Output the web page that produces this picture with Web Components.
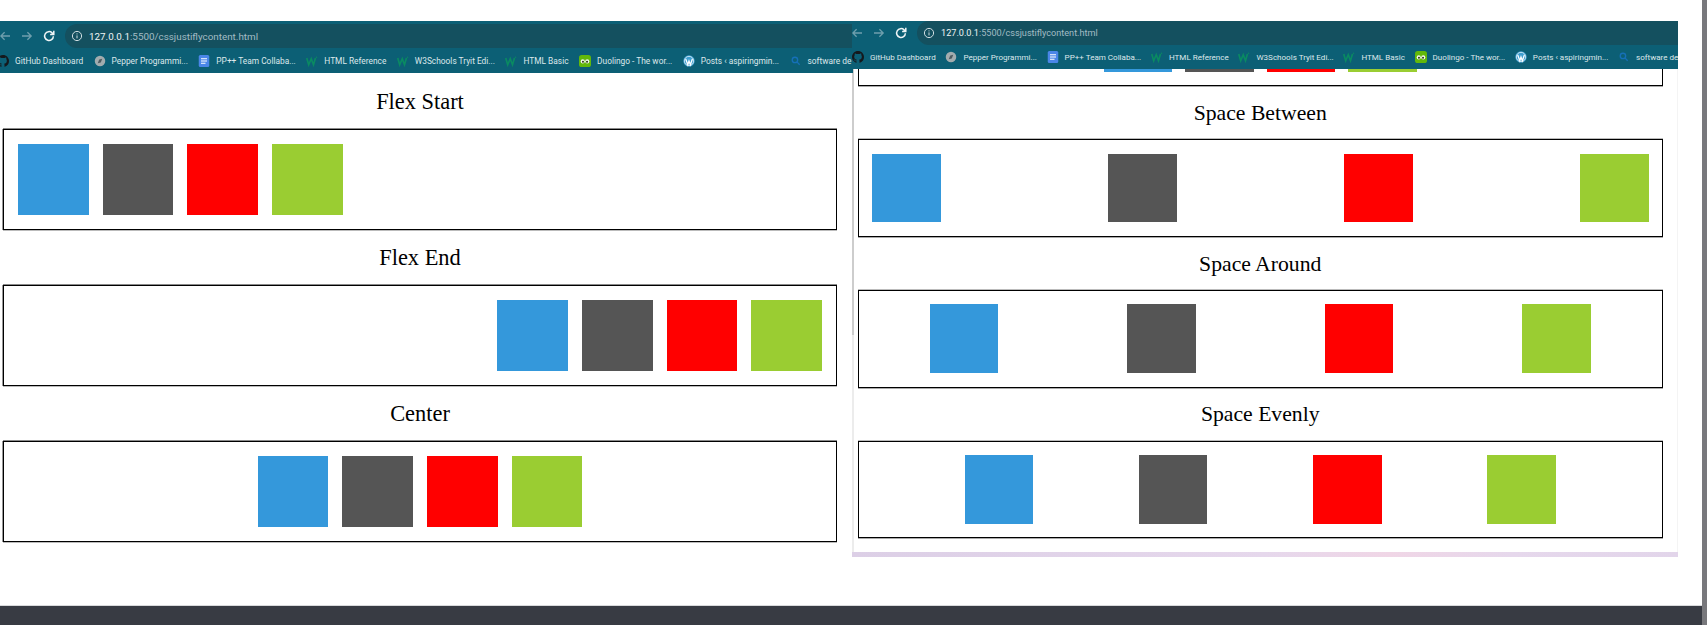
<!DOCTYPE html>
<html lang="en">
<head>
<meta charset="utf-8">
<title>cssjustiflycontent</title>
<style>
  html, body { margin: 0; height: 100%; background: #fff; overflow: hidden; }
</style>
</head>
<body>
<desk-top>
  <!-- left window, scrolled to the top of the demo page -->
  <browser-window url-host="127.0.0.1" url-rest=":5500/cssjustiflycontent.html"
    style="left:0;top:21px;width:853px;height:584px;--bar-h:27px;--pill-top:3px;--pill-h:24px;--url-size:9.85px;--marks-h:25px;--mark-size:8.35px;--mark-gap:10.5px;--marks-x:-3px;--page-pad:1.4px 16px 0 3px;--sq:70.7px;--m:7px;--p:7.5px;--head:54.3px;--head-size:22.4px;--edge:0 -1px 0 #8a8a8a,0 1px 0 #bbb,-1px 0 0 #999">
    <bookmark-bar>
      <book-mark icon="github">GitHub Dashboard</book-mark>
      <book-mark icon="pepper">Pepper Programmi...</book-mark>
      <book-mark icon="docs">PP++ Team Collaba...</book-mark>
      <book-mark icon="w3">HTML Reference</book-mark>
      <book-mark icon="w3">W3Schools Tryit Edi...</book-mark>
      <book-mark icon="w3">HTML Basic</book-mark>
      <book-mark icon="duo">Duolingo - The wor...</book-mark>
      <book-mark icon="wp">Posts ‹ aspiringmin...</book-mark>
      <book-mark icon="search">software de</book-mark>
    </bookmark-bar>
    <flex-demo heading="Flex Start" justify="flex-start"></flex-demo>
    <flex-demo heading="Flex End" justify="flex-end"></flex-demo>
    <flex-demo heading="Center" justify="center"></flex-demo>
  </browser-window>

  <!-- right window, same page scrolled further down -->
  <browser-window framed url-host="127.0.0.1" url-rest=":5500/cssjustiflycontent.html"
    style="left:852px;top:21px;width:826px;height:536px;--bar-h:24px;--pill-top:0px;--pill-h:24px;--url-size:9.15px;--marks-h:24px;--mark-size:8.05px;--mark-gap:9.7px;--marks-x:0px;--page-pad:0 14px 0 5.5px;--scroll:-133.5px;--sq:68.6px;--m:6.5px;--p:7px;--head:53.1px;--head-size:21.7px;--edge:0 -1px 0 #bbb,0 1px 0 #aaa">
    <bookmark-bar>
      <book-mark icon="github">GitHub Dashboard</book-mark>
      <book-mark icon="pepper">Pepper Programmi...</book-mark>
      <book-mark icon="docs">PP++ Team Collaba...</book-mark>
      <book-mark icon="w3">HTML Reference</book-mark>
      <book-mark icon="w3">W3Schools Tryit Edi...</book-mark>
      <book-mark icon="w3">HTML Basic</book-mark>
      <book-mark icon="duo">Duolingo - The wor...</book-mark>
      <book-mark icon="wp">Posts ‹ aspiringmin...</book-mark>
      <book-mark icon="search">software de</book-mark>
    </bookmark-bar>
    <flex-demo justify="center" nohead></flex-demo>
    <flex-demo heading="Space Between" justify="space-between"></flex-demo>
    <flex-demo heading="Space Around" justify="space-around"></flex-demo>
    <flex-demo heading="Space Evenly" justify="space-evenly"></flex-demo>
  </browser-window>
</desk-top>

<script>
// Desktop: the screen area with the two windows, the task bar and the dark edge on the right
class DeskTop extends HTMLElement {
  constructor() {
    super();
    this.attachShadow({ mode: "open" }).innerHTML = `
      <style>
        :host { display: grid; grid-template-columns: 1fr 5px; width: 1707px; height: 625px; background: #fff; overflow: hidden; }
        .screen { display: flex; flex-direction: column; min-width: 0; }
        .windows { flex: 1; position: relative; }
        .taskbar { height: 19px; background: #383b43; border-top: 1px solid #d9dadc; }
        .edge { background: #78787c; }
      </style>
      <div class="screen">
        <div class="windows"><slot></slot></div>
        <div class="taskbar"></div>
      </div>
      <div class="edge"></div>`;
  }
}

const ARROW_BACK = `<path d="M12 7H3M6.6 3.2 2.8 7l3.8 3.8"/>`;
const ARROW_FWD = `<path d="M2 7h9M7.4 3.2 11.2 7l-3.8 3.8"/>`;

class BrowserWindow extends HTMLElement {
  constructor() {
    super();
    const host = this.getAttribute("url-host");
    const rest = this.getAttribute("url-rest");
    this.attachShadow({ mode: "open" }).innerHTML = `
      <style>
        :host { position: absolute; display: flex; flex-direction: column; background: #fff; overflow: hidden; }
        .bar { flex: none; height: var(--bar-h); background: #0c5f75; display: flex; box-sizing: border-box; padding-top: var(--pill-top); }
        .nav { flex: none; width: 65px; display: flex; align-items: center; height: var(--pill-h); }
        .nav svg { flex: none; width: 14px; height: 14px; margin: 0 4px; fill: none; stroke: #6f9fad; stroke-width: 1.3; }
        .nav svg:first-child { margin-left: -2px; }
        .nav svg.reload { stroke: #f0f5f6; stroke-width: 1.5; }
        .pill { flex: 1; height: var(--pill-h); background: #14505f; border-radius: 12px 0 0 12px; display: flex; align-items: center; gap: 6px; padding-left: 6px;
                font: var(--url-size) Roboto, sans-serif; color: #a3bcc4; white-space: nowrap; }
        .pill svg { flex: none; width: 12px; height: 12px; }
        .pill b { font-weight: 400; color: #eef3f4; }
        .page { flex: 1; min-height: 0; overflow: hidden; box-sizing: border-box; padding: var(--page-pad); }
        .scroller { margin-top: var(--scroll, 0); }
        :host([framed]) .page { border-right: 1px solid #f4f4f4; background: linear-gradient(#cdcdcd 0 266px, #ececec 266px) left top / 2px 100% no-repeat; }
        .strip { display: none; }
        :host([framed]) .strip { display: block; flex: none; height: 5px; background: linear-gradient(90deg, #dccfe6, #e6d8ec 50%, #f0d6e6 65%, #e6d8ec 80%, #e2d5ea); }
      </style>
      <div class="bar">
        <div class="nav">
          <svg viewBox="0 0 14 14">${ARROW_BACK}</svg>
          <svg viewBox="0 0 14 14">${ARROW_FWD}</svg>
          <svg class="reload" viewBox="0 0 14 14"><path d="M11.4 7.2a4.4 4.4 0 1 1-1.3-3.3l1.5 1.4M11.8 1.8v3.7H8.1"/></svg>
        </div>
        <div class="pill">
          <svg viewBox="0 0 12 12" fill="none" stroke="#cfdde1"><circle cx="6" cy="6" r="4.6"/><path d="M6 5.4v3M6 3.4v1"/></svg>
          <span><b>${host}</b>${rest}</span>
        </div>
      </div>
      <slot name="marks"></slot>
      <div class="page"><div class="scroller"><slot></slot></div></div>
      <div class="strip"></div>`;
  }
  connectedCallback() {
    const bar = this.querySelector("bookmark-bar");
    if (bar) bar.slot = "marks";
  }
}

class BookmarkBar extends HTMLElement {
  constructor() {
    super();
    this.attachShadow({ mode: "open" }).innerHTML = `
      <style>
        :host { display: flex; flex: none; height: var(--marks-h); background: #0c5f75; align-items: center; gap: var(--mark-gap); overflow: hidden; white-space: nowrap; position: relative; z-index: 1; }
        ::slotted(:first-child) { margin-left: var(--marks-x); }
      </style>
      <slot></slot>`;
  }
}

const MARK_ICONS = {
  github: `<path fill="#15181c" d="M8 0C3.58 0 0 3.58 0 8c0 3.54 2.29 6.53 5.47 7.59.4.07.55-.17.55-.38 0-.19-.01-.82-.01-1.49-2.01.37-2.53-.49-2.69-.94-.09-.23-.48-.94-.82-1.13-.28-.15-.68-.52-.01-.53.63-.01 1.08.58 1.23.82.72 1.21 1.87.87 2.33.66.07-.52.28-.87.51-1.07-1.78-.2-3.64-.89-3.64-3.95 0-.87.31-1.59.82-2.15-.08-.2-.36-1.02.08-2.12 0 0 .67-.21 2.2.82.64-.18 1.32-.27 2-.27.68 0 1.36.09 2 .27 1.53-1.04 2.2-.82 2.2-.82.44 1.1.16 1.92.08 2.12.51.56.82 1.27.82 2.15 0 3.07-1.87 3.75-3.65 3.95.29.25.54.73.54 1.48 0 1.07-.01 1.93-.01 2.2 0 .21.15.46.55.38A8.013 8.013 0 0 0 16 8c0-4.42-3.58-8-8-8z"/>`,
  pepper: `<circle cx="8" cy="8" r="7" fill="#a2acae"/><path d="M5 11l2-5 4-1-2 5z" fill="#4e5b60"/>`,
  docs: `<rect x="1" y="0" width="14" height="16" rx="2" fill="#4a86e8"/><path d="M4 5h8M4 8h8M4 11h6" stroke="#fff" stroke-width="1.5"/>`,
  w3: `<path d="M1 4l2.6 9L7 5l3 8 2.6-9" fill="none" stroke="#0a8a62" stroke-width="2.2"/><path d="M13.2 3.4l1.6-.8" stroke="#0a8a62" stroke-width="1.4"/>`,
  duo: `<rect width="16" height="16" rx="3.5" fill="#62b80a"/><circle cx="5" cy="8.5" r="2.8" fill="#f3f7ee"/><circle cx="11" cy="8.5" r="2.8" fill="#f3f7ee"/><circle cx="5.3" cy="9" r="1.3" fill="#27330f"/><circle cx="10.7" cy="9" r="1.3" fill="#27330f"/>`,
  wp: `<circle cx="8" cy="8" r="7.6" fill="#3f9fd0"/><circle cx="8" cy="8" r="6.2" fill="none" stroke="#fff" stroke-width=".9"/><path d="M3.6 5.4 6.4 13 8 8l1.8 5 2.7-7.6" fill="none" stroke="#fff" stroke-width="1.7"/>`,
  search: `<circle cx="6.6" cy="6.6" r="3.6" fill="none" stroke="#1670b8" stroke-width="1.8"/><path d="M9.5 9.5l3.4 3.4" stroke="#1670b8" stroke-width="1.8"/>`
};

class BookMark extends HTMLElement {
  constructor() {
    super();
    const icon = MARK_ICONS[this.getAttribute("icon")] || "";
    this.attachShadow({ mode: "open" }).innerHTML = `
      <style>
        :host { display: inline-flex; flex: none; align-items: center; gap: 6px; font: var(--mark-size) Roboto, sans-serif; color: #dde8eb; }
        svg { flex: none; width: 12px; height: 12px; }
      </style>
      <svg viewBox="0 0 16 16">${icon}</svg>
      <slot></slot>`;
  }
}

// One justify-content demo: heading above a bordered flex box with four squares
class FlexDemo extends HTMLElement {
  constructor() {
    super();
    const head = this.hasAttribute("nohead") ? "" : this.getAttribute("heading");
    const justify = this.getAttribute("justify");
    this.attachShadow({ mode: "open" }).innerHTML = `
      <style>
        :host { display: block; }
        h2 { margin: 0; height: var(--head); box-sizing: border-box; padding-bottom: .68em; display: flex; align-items: flex-end; justify-content: center;
             font: 400 var(--head-size)/1 "Liberation Serif", "Times New Roman", serif; color: #000; }
        .box { display: flex; justify-content: ${justify}; border: 1px solid #000; padding: var(--p) 7px; box-shadow: var(--edge); }
      </style>
      <h2>${head}</h2>
      <div class="box">
        <demo-square color="#3498db"></demo-square>
        <demo-square color="#555555"></demo-square>
        <demo-square color="#ff0000"></demo-square>
        <demo-square color="#9acd32"></demo-square>
      </div>`;
  }
}

class DemoSquare extends HTMLElement {
  constructor() {
    super();
    this.attachShadow({ mode: "open" }).innerHTML = `
      <style>
        :host { display: block; flex: none; width: var(--sq); height: var(--sq); margin: var(--m); background: ${this.getAttribute("color")}; }
      </style>`;
  }
}

customElements.define("demo-square", DemoSquare);
customElements.define("flex-demo", FlexDemo);
customElements.define("book-mark", BookMark);
customElements.define("bookmark-bar", BookmarkBar);
customElements.define("browser-window", BrowserWindow);
customElements.define("desk-top", DeskTop);
</script>
</body>
</html>
